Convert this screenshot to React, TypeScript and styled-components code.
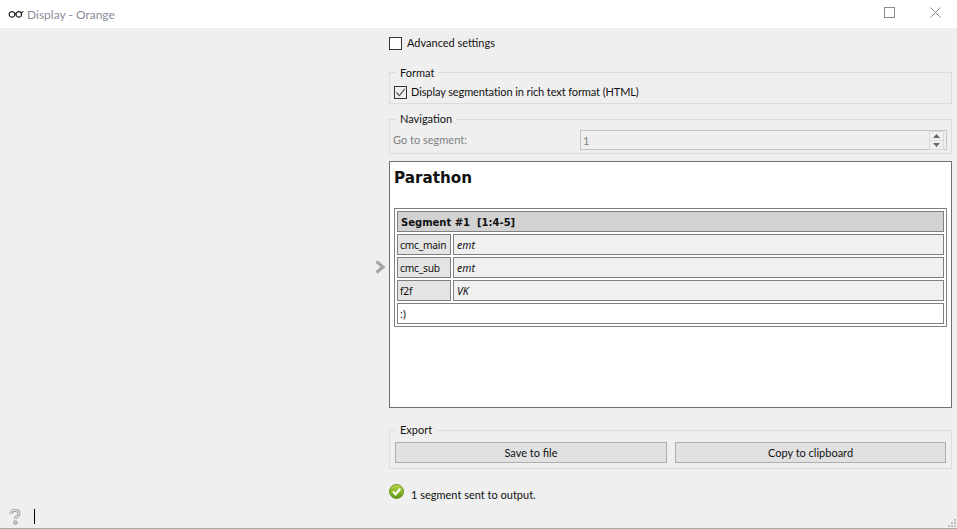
import React from "react";
import styled, { createGlobalStyle } from "styled-components";

const GlobalStyle = createGlobalStyle`
  html, body {
    margin: 0;
    padding: 0;
    height: 100%;
    background: #efefef;
    overflow: hidden;
  }
  #root {
    height: 100%;
  }
`;

const rows = [
  { name: "cmc_main", value: "emt" },
  { name: "cmc_sub", value: "emt" },
  { name: "f2f", value: "VK" },
];

export default function App() {
  return (
    <Window>
      <GlobalStyle />
      <TitleBar>
        <GlassesIcon width="17" height="8" viewBox="0 0 17 8">
          <circle cx="4" cy="4.4" r="2.8" fill="none" stroke="#222" strokeWidth="1.2" />
          <circle cx="10.8" cy="4.4" r="2.8" fill="none" stroke="#222" strokeWidth="1.2" />
          <path d="M6.8 3.6 L8 3.6 M13.4 2.8 L15.4 1.4" stroke="#222" strokeWidth="1.1" fill="none" />
        </GlassesIcon>
        <WindowTitle>Display - Orange</WindowTitle>
        <WindowButtons>
          <WindowButton />
          <WindowButton>
            <svg width="11" height="11" viewBox="0 0 11 11">
              <rect x="0.5" y="0.5" width="10" height="10" fill="none" stroke="#8c8c8c" />
            </svg>
          </WindowButton>
          <WindowButton>
            <svg width="11" height="11" viewBox="0 0 11 11">
              <path d="M0.5 0.5 L10.5 10.5 M10.5 0.5 L0.5 10.5" stroke="#8c8c8c" fill="none" />
            </svg>
          </WindowButton>
        </WindowButtons>
      </TitleBar>

      <Body>
        <ControlArea />
        <Splitter>
          <svg width="12" height="14" viewBox="0 0 12 14">
            <path d="M2.5 1.5 L9 7 L2.5 12.5" stroke="#a3a3a3" strokeWidth="3.2" fill="none" />
          </svg>
        </Splitter>
        <MainArea>
          <AdvancedRow>
            <CheckBox />
            <Label>Advanced settings</Label>
          </AdvancedRow>

          <FormatGroup>
            <GroupTitle>Format</GroupTitle>
            <CheckRow>
              <CheckBox $checked>
                <svg width="11" height="11" viewBox="0 0 11 11">
                  <path d="M1.5 5.5 L4.3 8.6 L9.8 1.8" stroke="#555" strokeWidth="1.2" fill="none" />
                </svg>
              </CheckBox>
              <TightLabel>Display segmentation in rich text format (HTML)</TightLabel>
            </CheckRow>
          </FormatGroup>

          <NavigationGroup>
            <GroupTitle>Navigation</GroupTitle>
            <NavRow>
              <MutedLabel>Go to segment:</MutedLabel>
              <SpinBox>
                <SpinValue>1</SpinValue>
                <SpinButtons>
                  <SpinButton>
                    <svg width="7" height="4" viewBox="0 0 7 4">
                      <path d="M3.5 0 L7 4 H0 Z" fill="#666" />
                    </svg>
                  </SpinButton>
                  <SpinButton>
                    <svg width="7" height="4" viewBox="0 0 7 4">
                      <path d="M0 0 H7 L3.5 4 Z" fill="#666" />
                    </svg>
                  </SpinButton>
                </SpinButtons>
              </SpinBox>
            </NavRow>
          </NavigationGroup>

          <TextBrowser>
            <DocTitle>Parathon</DocTitle>
            <SegmentTable>
              <tbody>
                <tr>
                  <SegmentHeader colSpan={2}>Segment #1&nbsp; [1:4-5]</SegmentHeader>
                </tr>
                {rows.map((row) => (
                  <tr key={row.name}>
                    <AnnotationKey>{row.name}</AnnotationKey>
                    <AnnotationValue>{row.value}</AnnotationValue>
                  </tr>
                ))}
                <tr>
                  <SegmentContent colSpan={2}>:)</SegmentContent>
                </tr>
              </tbody>
            </SegmentTable>
          </TextBrowser>

          <ExportGroup>
            <GroupTitle>Export</GroupTitle>
            <ButtonRow>
              <PushButton>Save to file</PushButton>
              <PushButton>Copy to clipboard</PushButton>
            </ButtonRow>
          </ExportGroup>

          <StatusRow>
            <svg width="16" height="16" viewBox="0 0 16 16">
              <defs>
                <linearGradient id="okFill" x1="0" y1="0" x2="0" y2="1">
                  <stop offset="0" stopColor="#b9d84a" />
                  <stop offset="1" stopColor="#5c9410" />
                </linearGradient>
              </defs>
              <circle cx="7.5" cy="7.5" r="7" fill="url(#okFill)" stroke="#6d9a1c" />
              <path d="M4 7.6 L6.6 10.4 L11.2 4.6" stroke="#fff" strokeWidth="2.2" fill="none" />
            </svg>
            <StatusText>1 segment sent to output.</StatusText>
          </StatusRow>
        </MainArea>
      </Body>

      <BottomBar>
        <HelpIcon width="12" height="16" viewBox="0 0 12 16">
          <path
            d="M2 5 C2 2.4 3.8 1.2 6 1.2 C8.4 1.2 10 2.6 10 4.6 C10 7.4 6.4 7.4 6.4 10"
            stroke="#9a9a9a"
            strokeWidth="3"
            fill="none"
          />
          <path
            d="M2 5 C2 2.4 3.8 1.2 6 1.2 C8.4 1.2 10 2.6 10 4.6 C10 7.4 6.4 7.4 6.4 10"
            stroke="#e6e6e6"
            strokeWidth="1.2"
            fill="none"
          />
          <circle cx="6.4" cy="13.6" r="1.8" fill="#c8c8c8" stroke="#9a9a9a" />
        </HelpIcon>
        <Caret />
        <ResizeGrip width="10" height="10" viewBox="0 0 10 10">
          <path d="M7 1h2v2H7z M4 4h2v2H4z M7 4h2v2H7z M1 7h2v2H1z M4 7h2v2H4z M7 7h2v2H7z" fill="#bdbdbd" />
        </ResizeGrip>
      </BottomBar>
    </Window>
  );
}

const uiFont = `Lato, "Open Sans", "Liberation Sans", sans-serif`;
const docFont = `"Noto Sans", "DejaVu Sans", sans-serif`;

const Window = styled.div`
  display: flex;
  flex-direction: column;
  width: 957px;
  height: 529px;
  background: #efefef;
  font-family: ${uiFont};
  font-size: 11px;
  color: #111;
  overflow: hidden;
  border-bottom: 1px solid #a9a9a9;
  box-sizing: border-box;
`;
const TitleBar = styled.div`
  display: flex;
  align-items: center;
  height: 28px;
  flex: none;
  padding-left: 8px;
  background: #fff;
`;
const GlassesIcon = styled.svg`
  margin-right: 2px;
`;
const WindowTitle = styled.div`
  font-size: 12px;
  color: #8b8b99;
`;
const WindowButtons = styled.div`
  display: flex;
  align-self: flex-start;
  margin: 0 -1px 0 auto;
`;
const WindowButton = styled.div`
  display: flex;
  align-items: center;
  justify-content: center;
  width: 46px;
  height: 25px;
`;
const Body = styled.div`
  display: flex;
  flex: 1;
  min-height: 0;
`;
const ControlArea = styled.div`
  width: 374px;
  flex: none;
`;
const Splitter = styled.div`
  display: flex;
  align-items: center;
  justify-content: flex-start;
  width: 15px;
  flex: none;
  height: 477px;
`;
const MainArea = styled.div`
  display: flex;
  flex-direction: column;
  width: 563px;
  flex: none;
`;
const AdvancedRow = styled.div`
  display: flex;
  align-items: center;
  gap: 5px;
  height: 14px;
  margin-top: 8px;
`;
const CheckBox = styled.div<{ $checked?: boolean }>`
  display: flex;
  align-items: center;
  justify-content: center;
  width: 13px;
  height: 13px;
  box-sizing: border-box;
  flex: none;
  background: ${(p) => (p.$checked ? "#efefef" : "#fff")};
  border: 1px solid #333;
`;
const Label = styled.span`
  font-size: 11px;
  line-height: 14px;
  white-space: nowrap;
`;
const TightLabel = styled(Label)`
  letter-spacing: -0.1px;
`;
const MutedLabel = styled.span`
  font-size: 11px;
  line-height: 14px;
  color: #808080;
`;
const SpinValue = styled(MutedLabel)`
  padding-top: 1px;
`;
const Group = styled.fieldset`
  margin: 0;
  padding: 0;
  min-width: 0;
  border: 1px solid #dcdcdc;
`;
const GroupTitle = styled.legend`
  margin-left: 6px;
  padding: 0 4px;
  font-size: 11px;
  line-height: 14px;
`;
const FormatGroup = styled(Group)`
  height: 39px;
  margin-top: 15px;
  box-sizing: border-box;
  legend {
    transform: translateY(1px);
  }
`;
const CheckRow = styled.div`
  display: flex;
  align-items: center;
  gap: 4px;
  padding: 6px 0 0 4px;
`;
const NavigationGroup = styled(Group)`
  height: 42px;
  margin-top: 8px;
  box-sizing: border-box;
`;
const NavRow = styled.div`
  display: flex;
  align-items: center;
  justify-content: space-between;
  padding: 4px 4px 0 3px;
`;
const SpinBox = styled.div`
  display: flex;
  align-items: center;
  justify-content: space-between;
  width: 367px;
  height: 20px;
  box-sizing: border-box;
  border: 1px solid #c4c4c4;
  padding: 0 2px;
`;
const SpinButtons = styled.div`
  display: flex;
  flex-direction: column;
`;
const SpinButton = styled.div`
  display: flex;
  align-items: center;
  justify-content: center;
  width: 13px;
  height: 8px;
  border: 1px solid #dadada;
  margin-top: -1px;
  &:first-child {
    margin-top: 0;
  }
`;
const TextBrowser = styled.div`
  height: 247px;
  margin-top: 7px;
  box-sizing: border-box;
  background: #fff;
  border: 1px solid #6f6f6f;
  padding: 0 4px;
  flex: none;
`;
const DocTitle = styled.div`
  font-family: "DejaVu Sans", Verdana, sans-serif;
  font-size: 15.2px;
  font-weight: 700;
  line-height: 19px;
  margin-top: 7px;
`;
const SegmentTable = styled.table`
  width: 100%;
  margin-top: 20px;
  border: 1px solid #808080;
  border-spacing: 2px;
  font-family: ${docFont};
  font-size: 10.5px;
`;
const Cell = styled.td`
  height: 21px;
  padding: 0 2px;
  box-sizing: border-box;
  border: 1px solid #808080;
  line-height: 12px;
`;
const SegmentHeader = styled(Cell)`
  background: #d2d2d2;
  font-family: "DejaVu Sans", Verdana, sans-serif;
  font-size: 10px;
  font-weight: 700;
  padding: 2px 2px 0 3px;
`;
const AnnotationKey = styled(Cell)`
  width: 54px;
  background: #e4e4e4;
  font-size: 10.2px;
  letter-spacing: -0.2px;
`;
const AnnotationValue = styled(Cell)`
  background: #f0f0f0;
  font-style: italic;
  padding-left: 3px;
`;
const SegmentContent = styled(Cell)`
  background: #fff;
`;
const ExportGroup = styled(Group)`
  height: 46px;
  margin-top: 15px;
  box-sizing: border-box;
  flex: none;
`;
const ButtonRow = styled.div`
  display: grid;
  grid-template-columns: 272px 271px;
  gap: 8px;
  padding: 5px 0 0 5px;
`;
const PushButton = styled.div`
  display: flex;
  align-items: center;
  justify-content: center;
  height: 21px;
  box-sizing: border-box;
  background: #e1e1e1;
  border: 1px solid #adadad;
  font-size: 11px;
`;
const StatusRow = styled.div`
  display: flex;
  align-items: flex-start;
  gap: 6px;
  margin-top: 15px;
`;
const StatusText = styled.span`
  font-size: 11px;
  line-height: 14px;
  margin-top: 4px;
`;
const BottomBar = styled.div`
  position: relative;
  display: flex;
  align-items: center;
  height: 23px;
  flex: none;
  padding-left: 9px;
`;
const HelpIcon = styled.svg`
  margin-right: 13px;
`;
const Caret = styled.div`
  width: 1px;
  height: 15px;
  background: #000;
`;
const ResizeGrip = styled.svg`
  position: absolute;
  right: 0;
  bottom: 0;
`;
